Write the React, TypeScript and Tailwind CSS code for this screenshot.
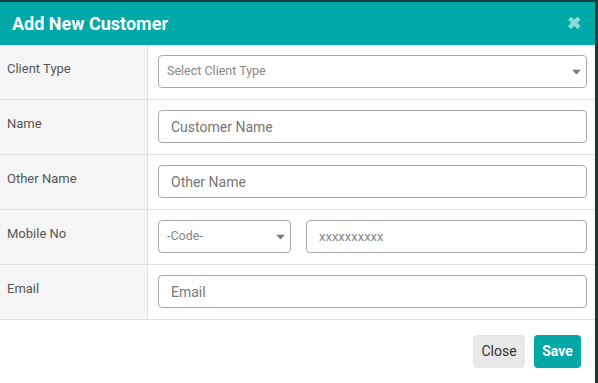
import { useState } from "react";

const rows = ["Client Type", "Name", "Other Name", "Mobile No", "Email"];

function Caret() {
  return (
    <svg width="9" height="5" viewBox="0 0 9 5" className="absolute right-[6px] top-1/2 -translate-y-1/2">
      <path d="M0 0h9L4.5 5z" fill="#777" />
    </svg>
  );
}

export default function App() {
  const [clientType, setClientType] = useState("");
  const [code, setCode] = useState("");

  const inputCls =
    "w-full h-[33px] border border-[#aaa] rounded-[4px] px-3 text-[14px] text-[#555] placeholder:text-[#777] outline-none bg-white";

  const fields: Record<string, React.ReactNode> = {
    "Client Type": (
      <div className="relative">
        <select
          value={clientType}
          onChange={(e) => setClientType(e.target.value)}
          className="w-full h-[33px] border border-[#aaa] rounded-[4px] pl-2 pr-6 text-[12.5px] text-[#888] appearance-none bg-white outline-none"
        >
          <option value="">Select Client Type</option>
          <option value="individual">Individual</option>
          <option value="company">Company</option>
        </select>
        <Caret />
      </div>
    ),
    Name: <input className={inputCls} placeholder="Customer Name" />,
    "Other Name": <input className={inputCls} placeholder="Other Name" />,
    "Mobile No": (
      <div className="flex gap-[15px]">
        <div className="relative w-[133px] shrink-0">
          <select
            value={code}
            onChange={(e) => setCode(e.target.value)}
            className="w-full h-[33px] border border-[#aaa] rounded-[4px] pl-2 pr-6 text-[12.5px] text-[#888] appearance-none bg-white outline-none"
          >
            <option value="">-Code-</option>
            <option value="+1">+1</option>
            <option value="+44">+44</option>
          </select>
          <Caret />
        </div>
        <input
          className="flex-1 h-[33px] border border-[#aaa] rounded-[4px] px-3 text-[13px] text-[#555] placeholder:text-[#888] outline-none bg-white"
          placeholder="xxxxxxxxxx"
        />
      </div>
    ),
    Email: <input className={inputCls} placeholder="Email" />,
  };

  return (
    <div
      className="w-[598px] h-[383px] bg-[#163c3c] pt-[2px] overflow-hidden"
      style={{ fontFamily: "Roboto, 'Liberation Sans', sans-serif" }}
    >
      <div className="w-[595px] h-[381px] bg-white flex flex-col">
        <div className="h-[43px] shrink-0 bg-[#00a8a8] flex items-center justify-between pl-3 pr-[14px]">
          <h2 className="text-[18px] font-bold text-white">Add New Customer</h2>
          <button className="text-[#8fdcd8] text-[17px] font-bold leading-none">✖</button>
        </div>
        <div>
          {rows.map((r) => (
            <div key={r} className="flex h-[55px] border-b border-[#e0e0e0]">
              <div className="w-[148px] shrink-0 bg-[#f5f5f5] border-r border-[#e0e0e0] px-[7px] pt-[14px] text-[13px] text-[#555]">
                {r}
              </div>
              <div className="flex-1 pl-[10px] pr-[8px] pt-[10px]">{fields[r]}</div>
            </div>
          ))}
        </div>
        <div className="flex justify-end gap-[9px] pr-[14px] pt-[15px]">
          <button className="h-[33px] w-[52px] rounded-[4px] bg-[#e8e8e8] text-[14px] text-[#333]">Close</button>
          <button className="h-[33px] w-[47px] rounded-[4px] bg-[#00a8a8] text-[14px] font-bold text-white">Save</button>
        </div>
      </div>
    </div>
  );
}
